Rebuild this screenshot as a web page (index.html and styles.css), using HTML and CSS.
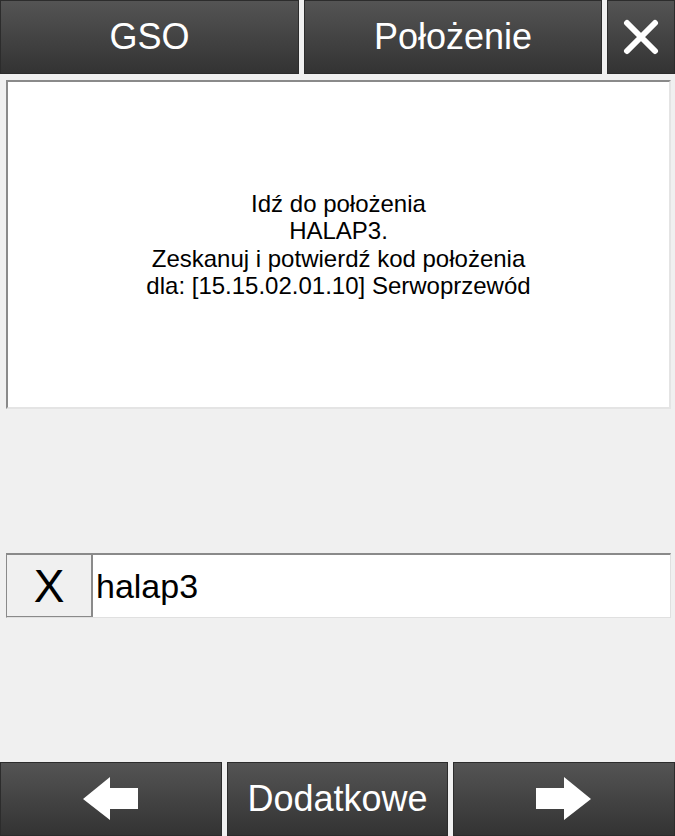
FILE: index.html
```html
<!DOCTYPE html>
<html lang="pl">
<head>
<meta charset="utf-8">
<title>Położenie</title>
<link rel="stylesheet" href="styles.css">
</head>
<body>
<div class="app">
  <header class="topbar">
    <div class="btn">GSO</div>
    <div class="btn">Położenie</div>
    <div class="btn btn-close">
      <svg width="36" height="36" viewBox="0 0 36 36"><path d="M4 4 L32 32 M32 4 L4 32" stroke="#fff" stroke-width="6" stroke-linecap="round"/></svg>
    </div>
  </header>
  <section class="message">
    <p>Idź do położenia<br>HALAP3.<br>Zeskanuj i potwierdź kod położenia<br>dla: [15.15.02.01.10] Serwoprzewód</p>
  </section>
  <div class="spacer"></div>
  <div class="inputrow">
    <div class="clear">X</div>
    <div class="field">halap3</div>
  </div>
  <div class="spacer2"></div>
  <footer class="bottombar">
    <div class="btn">
      <svg width="56" height="44" viewBox="0 0 56 44"><polygon points="0,22 27,0 27,11 55,11 55,32 27,32 27,43" fill="#fff"/></svg>
    </div>
    <div class="btn">Dodatkowe</div>
    <div class="btn">
      <svg width="56" height="44" viewBox="0 0 56 44"><polygon points="55,22 28,0 28,11 0,11 0,32 28,32 28,43" fill="#fff"/></svg>
    </div>
  </footer>
</div>
</body>
</html>
```

FILE: styles.css
```css
html, body {
  margin: 0;
  padding: 0;
  background: #f0f0f0;
  font-family: "Liberation Sans", Arial, sans-serif;
}
.app {
  width: 675px;
  height: 836px;
  display: flex;
  flex-direction: column;
}
.topbar {
  display: grid;
  grid-template-columns: 299px 298px 1fr;
  column-gap: 5px;
  height: 74px;
  flex: none;
}
.btn {
  background: linear-gradient(#545454, #333333);
  border: 1px solid #2c2c2c;
  box-sizing: border-box;
  color: #fff;
  font-size: 36px;
  display: flex;
  align-items: center;
  justify-content: center;
}
.btn-close svg { display: block; }
.message {
  margin: 6px 4px 0 6px;
  height: 329px;
  box-sizing: border-box;
  background: #fff;
  border-top: 2px solid #8a8a8a;
  border-left: 2px solid #8a8a8a;
  border-right: 2px solid #e4e4e4;
  border-bottom: 2px solid #e4e4e4;
  display: flex;
  align-items: center;
  justify-content: center;
  flex: none;
}
.message p {
  margin: 0;
  text-align: center;
  font-size: 24px;
  line-height: 27.5px;
  color: #000;
}
.spacer { height: 144px; flex: none; }
.inputrow {
  margin: 0 4px 0 6px;
  height: 65px;
  display: flex;
  background: #fff;
  border-top: 2px solid #8a8a8a;
  border-left: 1px solid #8a8a8a;
  border-bottom: 1px solid #e0e0e0;
  border-right: 1px solid #e0e0e0;
  box-sizing: border-box;
  flex: none;
}
.clear {
  width: 86px;
  flex: none;
  background: #f0f0f0;
  border-right: 2px solid #8a8a8a;
  border-bottom: 1px solid #8a8a8a;
  box-sizing: border-box;
  display: flex;
  align-items: center;
  justify-content: center;
  font-size: 46px;
  color: #000;
}
.field {
  flex: 1;
  display: flex;
  align-items: center;
  padding-left: 3px;
  font-size: 34px;
  color: #000;
}
.spacer2 { height: 144px; flex: none; }
.bottombar {
  display: grid;
  grid-template-columns: 1fr 1fr 1fr;
  column-gap: 5px;
  height: 74px;
  flex: none;
}
.bottombar svg { display: block; }
```
